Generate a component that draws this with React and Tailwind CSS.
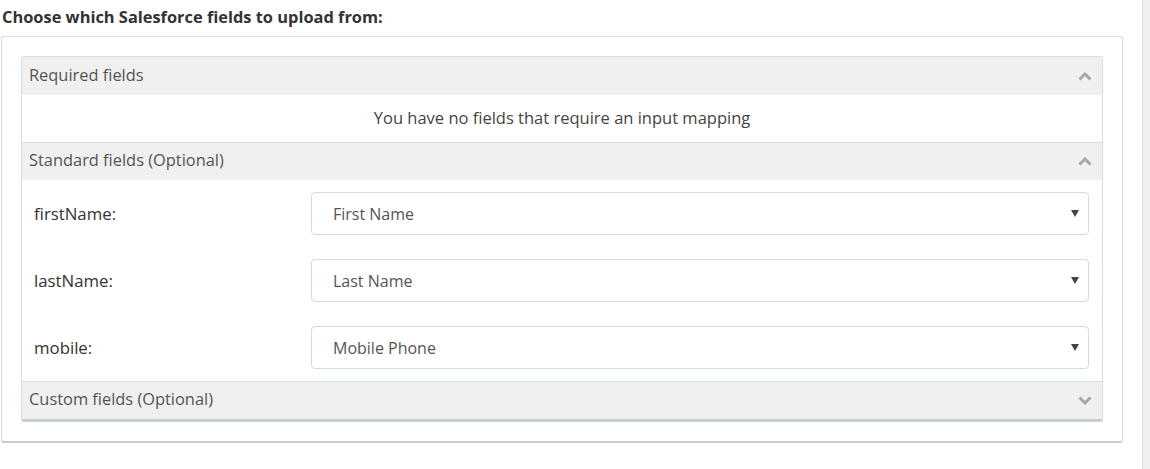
import React from "react";

const font = { fontFamily: '"Open Sans", "Noto Sans", sans-serif' };

function Chevron({ up }) {
  return (
    <svg width="14" height="9" viewBox="0 0 14 9" className="block">
      <polyline
        points={up ? "1.5,7.5 7,2 12.5,7.5" : "1.5,1.5 7,7 12.5,1.5"}
        fill="none"
        stroke="#a8a8a8"
        strokeWidth="3"
        strokeLinecap="butt"
      />
    </svg>
  );
}

function Header({ title, up, top }) {
  return (
    <div
      className={`h-[38px] bg-[#f0f0f0] flex items-center justify-between pl-[7px] pr-[10px] ${
        top ? "" : "border-t border-[#d5dee0]"
      }`}
    >
      <span className="text-[16.4px] leading-[22px] text-[#555] -mt-[3px]">{title}</span>
      <Chevron up={up} />
    </div>
  );
}

function Row({ label, value }) {
  return (
    <div className="flex items-center h-[43px]">
      <div className="w-[277px] text-[16.8px] text-[#333]">{label}</div>
      <div className="w-[778px] h-[43px] border border-[#d3dcde] rounded-[4px] bg-white flex items-center justify-between pl-[21px] pr-[9px]">
        <span className="text-[16px] text-[#555]">{value}</span>
        <svg width="8" height="7" viewBox="0 0 8 7" className="block">
          <polygon points="0,0 8,0 4,7" fill="#444" />
        </svg>
      </div>
    </div>
  );
}

export default function App() {
  return (
    <div className="w-[1150px] h-[469px] bg-white flex" style={font}>
      <div className="w-[1142px] pl-[1px] pr-[19px]">
        <div className="pt-[7px] pl-[1px] text-[16.4px] leading-[20px] font-bold text-[#333]">
          Choose which Salesforce fields to upload from:
        </div>
        <div className="mt-[9px] border border-[#d5dee0] border-b-2 border-b-[#c3ced1] rounded-[3px] p-[19px]">
          <div className="border border-[#d5dee0] border-b-[3px] border-b-[#c3ced1] rounded-[3px] overflow-hidden">
            <Header title="Required fields" up top />
            <div className="h-[47px] flex items-center justify-center bg-white">
              <span className="text-[16.5px] text-[#444]">
                You have no fields that require an input mapping
              </span>
            </div>
            <Header title="Standard fields (Optional)" up />
            <div className="bg-white pt-[12px] pb-[12px] pl-[12px] flex flex-col gap-[24px]">
              <Row label="firstName:" value="First Name" />
              <Row label="lastName:" value="Last Name" />
              <Row label="mobile:" value="Mobile Phone" />
            </div>
            <Header title="Custom fields (Optional)" />
          </div>
        </div>
      </div>
      <div className="w-[8px] border-l border-[#d5dee0] bg-[#eef1f2]" />
    </div>
  );
}
